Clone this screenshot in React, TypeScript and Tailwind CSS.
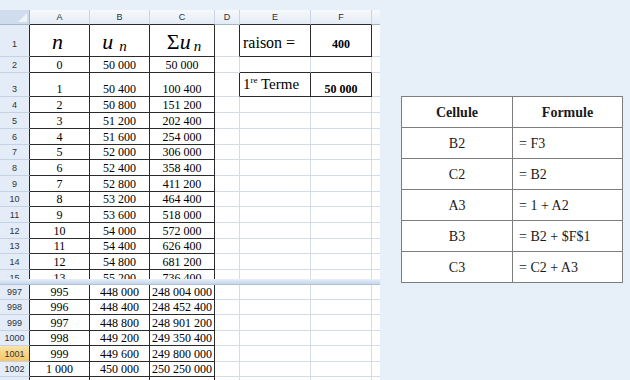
import React from "react";

const fmt = (v: number) => v.toString().replace(/\B(?=(\d{3})+(?!\d))/g, "\u00a0");

const W = [
  "w-[30px]",
  "w-[60px]",
  "w-[60px]",
  "w-[65px]",
  "w-[25px]",
  "w-[71px]",
  "w-[61px]",
  "w-[8px]",
];

type CellProps = {
  i: number;
  r?: boolean;
  b?: boolean;
  noR?: boolean;
  className?: string;
  children?: React.ReactNode;
};

function Cell({ i, r, b, noR, className = "", children }: CellProps) {
  return (
    <div
      className={`${W[i]} shrink-0 box-border border-b ${noR ? "" : "border-r"} ${
        r ? "border-r-[#2b2b2b]" : "border-r-[#d5dce8]"
      } ${b ? "border-b-[#2b2b2b]" : "border-b-[#d5dce8]"} flex items-end overflow-hidden bg-white ${
        className || "justify-center"
      }`}
    >
      {children}
    </div>
  );
}

function RH({ label, hl, pb = "pb-[2px]" }: { label: string; hl?: boolean; pb?: string }) {
  return (
    <div
      className={`w-[30px] shrink-0 box-border border-r border-b border-r-[#2b2b2b] border-b-[#c5d2e3] ${
        hl ? "bg-[linear-gradient(#fbe3ab,#f6c561)]" : "bg-[#e4ecf7]"
      } flex items-end justify-center ${pb} text-[9px] leading-none text-[#2c3440] font-['Liberation_Sans',sans-serif]`}
    >
      {label}
    </div>
  );
}

function DataRow({
  h,
  label,
  a,
  b,
  c,
  hl,
}: {
  h: string;
  label: string;
  a?: string;
  b?: string;
  c?: string;
  hl?: boolean;
}) {
  return (
    <div className={`flex ${h}`}>
      <RH label={label} hl={hl} />
      <Cell i={1} r b>
        {a}
      </Cell>
      <Cell i={2} r b>
        {b}
      </Cell>
      <Cell i={3} r b>
        {c}
      </Cell>
      <Cell i={4} />
      <Cell i={5} />
      <Cell i={6} />
      <Cell i={7} noR />
    </div>
  );
}

const S = (n: number) => 50000 * (n + 1) + 200 * n * (n + 1);
const U = (n: number) => 50000 + 400 * n;

const topHeights = [
  "h-[16px]",
  "h-[16px]",
  "h-[16px]",
  "h-[15px]",
  "h-[16px]",
  "h-[16px]",
  "h-[15px]",
  "h-[16px]",
  "h-[16px]",
  "h-[15px]",
  "h-[16px]",
];
const bottomHeights = ["h-[15px]", "h-[15px]", "h-[16px]", "h-[15px]", "h-[16px]", "h-[15px]"];

function HeaderCell({ i, label, dark, noR }: { i: number; label: string; dark?: boolean; noR?: boolean }) {
  return (
    <div
      className={`${W[i]} shrink-0 box-border border-b ${noR ? "" : "border-r"} border-r-[#c9d5e5] ${
        dark ? "border-b-[#2b2b2b]" : "border-b-[#9eb6ce]"
      } bg-[linear-gradient(#f7f9fc,#e3ebf5)] flex items-center justify-center text-[9px] leading-none text-[#27313f] font-['Liberation_Sans',sans-serif]`}
    >
      {label}
    </div>
  );
}

function Sheet() {
  return (
    <div className="w-[380px] shrink-0 pt-[10px] flex flex-col font-['Liberation_Serif',serif] text-[12px] leading-[14px] text-black">
      {/* column headers */}
      <div className="flex h-[15px]">
        <div className="w-[30px] shrink-0 box-border border-r border-b border-r-[#9eb6ce] border-b-[#9eb6ce] bg-[#cfdcee] flex items-end justify-end p-[2px]">
          <svg width="9" height="9" viewBox="0 0 9 9">
            <polygon points="9,0 9,9 0,9" fill="#eef3f9" />
          </svg>
        </div>
        <HeaderCell i={1} label="A" dark />
        <HeaderCell i={2} label="B" dark />
        <HeaderCell i={3} label="C" dark />
        <HeaderCell i={4} label="D" />
        <HeaderCell i={5} label="E" dark />
        <HeaderCell i={6} label="F" dark />
        <HeaderCell i={7} label="" noR />
      </div>

      {/* row 1 */}
      <div className="flex h-[32px]">
        <RH label="1" pb="pb-[7px]" />
        <Cell i={1} r b className="justify-center pr-[4px] pb-[3px]">
          <span className="italic text-[22px] leading-[22px]">n</span>
        </Cell>
        <Cell i={2} r b className="justify-center pr-[10px] pb-[3px]">
          <span className="italic text-[22px] leading-[22px]">u</span>
          <span className="italic text-[15px] leading-[22px] relative top-[4px] ml-[6px]">n</span>
        </Cell>
        <Cell i={3} r b className="justify-center pl-[4px] pb-[3px]">
          <span className="text-[22px] leading-[22px]">Σ</span>
          <span className="italic text-[22px] leading-[22px]">u</span>
          <span className="italic text-[15px] leading-[22px] relative top-[4px] ml-[3px]">n</span>
        </Cell>
        <Cell i={4} r />
        <Cell i={5} r b className="justify-start pl-[3px] pb-[5px]">
          <span className="text-[16px] leading-[16px]">raison =</span>
        </Cell>
        <Cell i={6} r b className="justify-center pb-[5px]">
          <span className="font-bold">400</span>
        </Cell>
        <Cell i={7} noR />
      </div>

      {/* row 2 */}
      <div className="flex h-[16px]">
        <RH label="2" />
        <Cell i={1} r b>
          0
        </Cell>
        <Cell i={2} r b>
          {fmt(50000)}
        </Cell>
        <Cell i={3} r b>
          {fmt(50000)}
        </Cell>
        <Cell i={4} />
        <Cell i={5} b />
        <Cell i={6} b />
        <Cell i={7} noR />
      </div>

      {/* row 3 */}
      <div className="flex h-[24px]">
        <RH label="3" />
        <Cell i={1} r b>
          1
        </Cell>
        <Cell i={2} r b>
          {fmt(50400)}
        </Cell>
        <Cell i={3} r b>
          {fmt(100400)}
        </Cell>
        <Cell i={4} r />
        <Cell i={5} r b className="justify-start pl-[3px] pb-[2px]">
          <span className="text-[15px] leading-[15px]">
            1<span className="text-[9px] relative top-[-6px]">re</span> Terme
          </span>
        </Cell>
        <Cell i={6} r b className="justify-center">
          <span className="font-bold">{fmt(50000)}</span>
        </Cell>
        <Cell i={7} noR />
      </div>

      {/* rows 4-14 */}
      {topHeights.map((h, k) => {
        const n = k + 2;
        return <DataRow key={n} h={h} label={String(n + 2)} a={String(n)} b={fmt(U(n))} c={fmt(S(n))} />;
      })}

      {/* row 15 partial */}
      <div className="h-[9px] overflow-hidden">
        <DataRow h="h-[16px]" label="15" a="13" b={fmt(U(13))} c={fmt(S(13))} />
      </div>

      {/* split bar */}
      <div className="h-[6px] w-[380px] box-border border-b border-b-[#aec3dc] bg-[linear-gradient(#e8eff8,#c6d6ea)]" />

      {/* rows 997-1002 */}
      {bottomHeights.map((h, k) => {
        const n = 995 + k;
        return (
          <DataRow
            key={n}
            h={h}
            label={String(n + 2)}
            a={fmt(n)}
            b={fmt(U(n))}
            c={fmt(S(n))}
            hl={n === 999}
          />
        );
      })}

      <div className="h-[3px] overflow-hidden">
        <DataRow h="h-[15px]" label="1003" />
      </div>
    </div>
  );
}

const formulas: [string, string][] = [
  ["B2", "= F3"],
  ["C2", "= B2"],
  ["A3", "= 1 + A2"],
  ["B3", "= B2 + $F$1"],
  ["C3", "= C2 + A3"],
];

export default function App() {
  return (
    <div className="w-[630px] h-[380px] bg-[#e7f0f8] flex overflow-hidden">
      <Sheet />
      <div className="ml-[21px] mt-[96px] self-start">
        <table className="border-collapse bg-white font-['Liberation_Serif',serif] text-[14px] text-[#1a1a1a]">
          <thead>
            <tr className="h-[31px]">
              <th className="w-[111px] border border-[#7d7d7d] font-bold p-0">Cellule</th>
              <th className="w-[110px] border border-[#7d7d7d] font-bold p-0">Formule</th>
            </tr>
          </thead>
          <tbody>
            {formulas.map(([a, b]) => (
              <tr key={a} className="h-[31px]">
                <td className="border border-[#7d7d7d] text-center p-0">{a}</td>
                <td className="border border-[#7d7d7d] text-left pl-[6px] p-0">{b}</td>
              </tr>
            ))}
          </tbody>
        </table>
      </div>
    </div>
  );
}
